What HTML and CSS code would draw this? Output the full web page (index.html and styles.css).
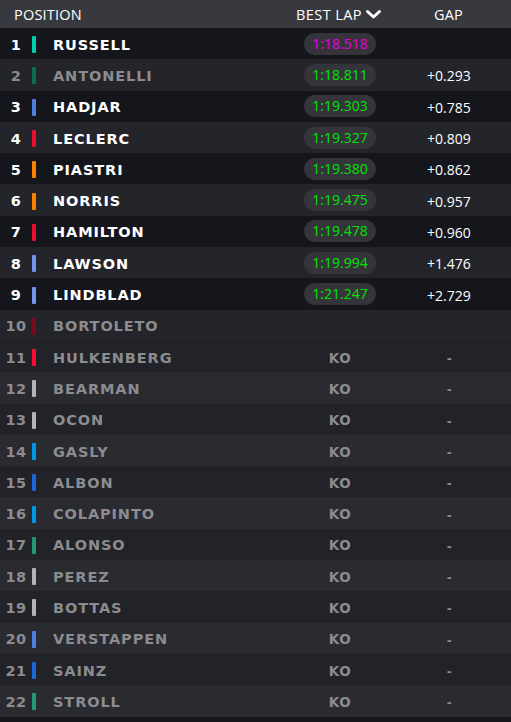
FILE: index.html
```html
<!DOCTYPE html>
<html>
<head>
<meta charset="utf-8">
<link rel="stylesheet" href="styles.css">
</head>
<body>
<div class="board">
  <div class="head">
    <div class="h-pos">POSITION</div>
    <div class="h-lap">BEST LAP <svg class="chev" width="17" height="11" viewBox="0 0 17 11"><path d="M2.5 2.5 L8.5 8 L14.5 2.5" fill="none" stroke="#fff" stroke-width="3" stroke-linecap="round" stroke-linejoin="round"/></svg></div>
    <div class="h-gap">GAP</div>
  </div>
  <div class="rows">
    <div class="row a"><span class="pos">1</span><span class="bar" style="background:#00cfae"></span><span class="name">RUSSELL</span><span class="lap"><span class="pill purple">1:18.518</span></span><span class="gap"></span></div>
    <div class="row b dim"><span class="pos">2</span><span class="bar" style="background:#0a6e55"></span><span class="name">ANTONELLI</span><span class="lap"><span class="pill green">1:18.811</span></span><span class="gap">+0.293</span></div>
    <div class="row a"><span class="pos">3</span><span class="bar" style="background:#4d7fdc"></span><span class="name">HADJAR</span><span class="lap"><span class="pill green">1:19.303</span></span><span class="gap">+0.785</span></div>
    <div class="row b"><span class="pos">4</span><span class="bar" style="background:#e8102a"></span><span class="name">LECLERC</span><span class="lap"><span class="pill green">1:19.327</span></span><span class="gap">+0.809</span></div>
    <div class="row a"><span class="pos">5</span><span class="bar" style="background:#ff8000"></span><span class="name">PIASTRI</span><span class="lap"><span class="pill green">1:19.380</span></span><span class="gap">+0.862</span></div>
    <div class="row b"><span class="pos">6</span><span class="bar" style="background:#ff8000"></span><span class="name">NORRIS</span><span class="lap"><span class="pill green">1:19.475</span></span><span class="gap">+0.957</span></div>
    <div class="row a"><span class="pos">7</span><span class="bar" style="background:#e8102a"></span><span class="name">HAMILTON</span><span class="lap"><span class="pill green">1:19.478</span></span><span class="gap">+0.960</span></div>
    <div class="row b"><span class="pos">8</span><span class="bar" style="background:#7594ee"></span><span class="name">LAWSON</span><span class="lap"><span class="pill green">1:19.994</span></span><span class="gap">+1.476</span></div>
    <div class="row a"><span class="pos">9</span><span class="bar" style="background:#7594ee"></span><span class="name">LINDBLAD</span><span class="lap"><span class="pill green">1:21.247</span></span><span class="gap">+2.729</span></div>
    <div class="row b dim"><span class="pos">10</span><span class="bar" style="background:#7a0a1e"></span><span class="name">BORTOLETO</span><span class="lap"></span><span class="gap"></span></div>
    <div class="row c dim"><span class="pos">11</span><span class="bar" style="background:#ff0a35"></span><span class="name">HULKENBERG</span><span class="lap ko">KO</span><span class="gap dash">-</span></div>
    <div class="row d dim"><span class="pos">12</span><span class="bar" style="background:#b4b4b8"></span><span class="name">BEARMAN</span><span class="lap ko">KO</span><span class="gap dash">-</span></div>
    <div class="row c dim"><span class="pos">13</span><span class="bar" style="background:#b4b4b8"></span><span class="name">OCON</span><span class="lap ko">KO</span><span class="gap dash">-</span></div>
    <div class="row d dim"><span class="pos">14</span><span class="bar" style="background:#0098e6"></span><span class="name">GASLY</span><span class="lap ko">KO</span><span class="gap dash">-</span></div>
    <div class="row c dim"><span class="pos">15</span><span class="bar" style="background:#1a66db"></span><span class="name">ALBON</span><span class="lap ko">KO</span><span class="gap dash">-</span></div>
    <div class="row d dim"><span class="pos">16</span><span class="bar" style="background:#0098e6"></span><span class="name">COLAPINTO</span><span class="lap ko">KO</span><span class="gap dash">-</span></div>
    <div class="row c dim"><span class="pos">17</span><span class="bar" style="background:#229971"></span><span class="name">ALONSO</span><span class="lap ko">KO</span><span class="gap dash">-</span></div>
    <div class="row d dim"><span class="pos">18</span><span class="bar" style="background:#b4b4b8"></span><span class="name">PEREZ</span><span class="lap ko">KO</span><span class="gap dash">-</span></div>
    <div class="row c dim"><span class="pos">19</span><span class="bar" style="background:#b4b4b8"></span><span class="name">BOTTAS</span><span class="lap ko">KO</span><span class="gap dash">-</span></div>
    <div class="row d dim"><span class="pos">20</span><span class="bar" style="background:#4d7fdc"></span><span class="name">VERSTAPPEN</span><span class="lap ko">KO</span><span class="gap dash">-</span></div>
    <div class="row c dim"><span class="pos">21</span><span class="bar" style="background:#1a66db"></span><span class="name">SAINZ</span><span class="lap ko">KO</span><span class="gap dash">-</span></div>
    <div class="row d dim"><span class="pos">22</span><span class="bar" style="background:#229971"></span><span class="name">STROLL</span><span class="lap ko">KO</span><span class="gap dash">-</span></div>
  </div>
</div>
</body>
</html>
```
FILE: styles.css
```css
html, body {
  margin: 0;
  padding: 0;
  background: #15151c;
}
.board {
  width: 511px;
  height: 722px;
  background: #15151c;
  font-family: "Open Sans", sans-serif;
  color: #fff;
  overflow: hidden;
}
.head {
  height: 28px;
  background: #38393e;
  display: grid;
  grid-template-columns: 280px 120px 111px;
  align-items: center;
  font-size: 14.5px;
  letter-spacing: 0.2px;
}
.h-pos {
  padding-left: 14px;
}
.h-lap {
  display: flex;
  align-items: center;
  justify-content: center;
  gap: 3px;
  padding-right: 2px;
  letter-spacing: 0.4px;
}
.chev {
  display: block;
}
.h-gap {
  text-align: left;
  padding-left: 34px;
}
.row {
  box-sizing: border-box;
  height: 31.3px;
  padding-top: 2px;
  display: grid;
  grid-template-columns: 32px 7px 14px 227px 120px 111px;
  align-items: center;
}
.row.a { background: #15151c; }
.row.b { background: #24242b; }
.row.c { background: #222229; }
.row.d { background: #2a2a31; }
.pos {
  grid-column: 1;
  text-align: center;
  font-family: "DejaVu Sans", sans-serif;
  font-weight: bold;
  font-size: 14.5px;
  letter-spacing: 0.3px;
}
.bar {
  grid-column: 2 / 3;
  justify-self: start;
  width: 4px;
  height: 17px;
  border-radius: 1px;
}
.name {
  grid-column: 4;
  font-family: "DejaVu Sans", sans-serif;
  font-weight: bold;
  font-size: 14.5px;
  letter-spacing: 0.9px;
}
.dim .pos, .dim .name, .dim .ko, .dim .dash {
  color: #8c8c90;
}
.lap {
  grid-column: 5;
  display: flex;
  justify-content: center;
  margin-top: -2px;
}
.pill {
  display: inline-block;
  background: #34343a;
  border-radius: 11px;
  height: 22px;
  line-height: 22px;
  padding: 0 8px;
  font-size: 14px;
}
.lap.ko {
  margin-top: 0;
}
.green { color: #00e400; }
.purple { color: #e800e8; }
.gap {
  grid-column: 6;
  font-size: 14px;
  padding-left: 27px;
}
.ko {
  font-family: "DejaVu Sans", sans-serif;
  font-weight: bold;
  font-size: 13.5px;
  letter-spacing: 0.5px;
}
.gap.dash {
  padding-left: 47px;
  font-weight: bold;
}
```
